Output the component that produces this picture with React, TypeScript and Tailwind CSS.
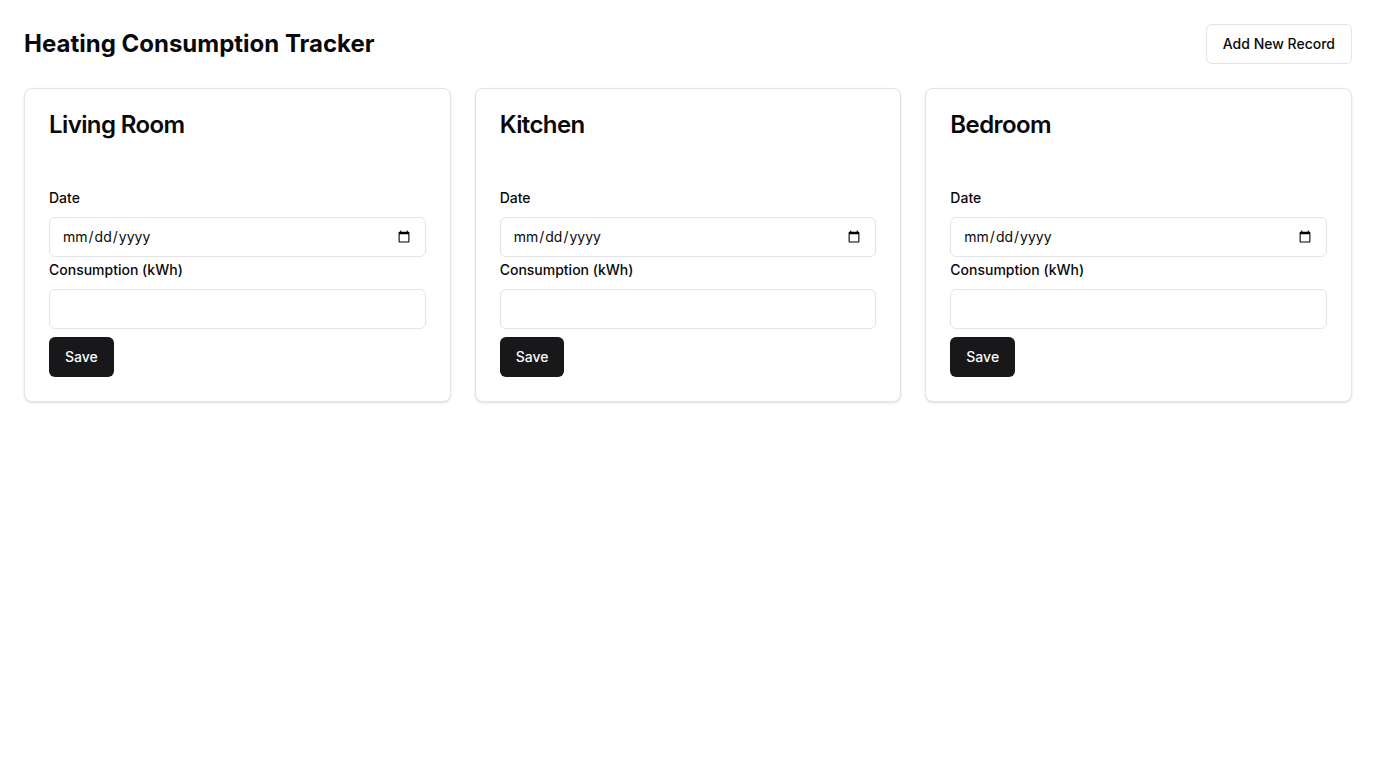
import React from "react";

const rooms = ["Living Room", "Kitchen", "Bedroom"];

function RoomCard({ name }: { name: string }) {
  return (
    <div className="rounded-lg border border-[#e4e4e7] bg-white shadow-sm">
      <div className="flex flex-col p-6">
        <h3 className="text-2xl font-semibold leading-6 tracking-tight text-[#09090b]">{name}</h3>
        <p className="mt-1.5 h-5 text-sm"></p>
      </div>
      <div className="px-6 pb-6">
        <label className="mt-px block text-sm font-medium leading-5 text-[#09090b]">Date</label>
        <input
          type="date"
          className="mt-[9px] block h-10 w-full rounded-md border border-[#e4e4e7] bg-white px-3 py-2 text-sm text-[#09090b] outline-none"
        />
        <label className="mt-[3px] block text-sm font-medium leading-5 text-[#09090b]">Consumption (kWh)</label>
        <input
          type="number"
          className="mt-[9px] block h-10 w-full rounded-md border border-[#e4e4e7] bg-white px-3 py-2 text-sm outline-none"
        />
        <button className="mt-2 inline-flex h-10 items-center justify-center rounded-md bg-[#18181b] px-4 text-sm font-medium text-[#fafafa]">
          Save
        </button>
      </div>
    </div>
  );
}

export default function App() {
  return (
    <div className="min-h-screen bg-white p-6 text-[#09090b]" style={{ fontFamily: "Inter, 'Noto Sans', sans-serif" }}>
      <div className="mb-6 flex h-10 items-center justify-between">
        <h1 className="text-2xl font-bold">Heating Consumption Tracker</h1>
        <button className="inline-flex h-10 items-center justify-center rounded-md border border-[#e4e4e7] bg-white px-4 text-sm font-medium">
          Add New Record
        </button>
      </div>
      <div className="grid grid-cols-3 gap-6">
        {rooms.map((r) => (
          <RoomCard key={r} name={r} />
        ))}
      </div>
    </div>
  );
}
